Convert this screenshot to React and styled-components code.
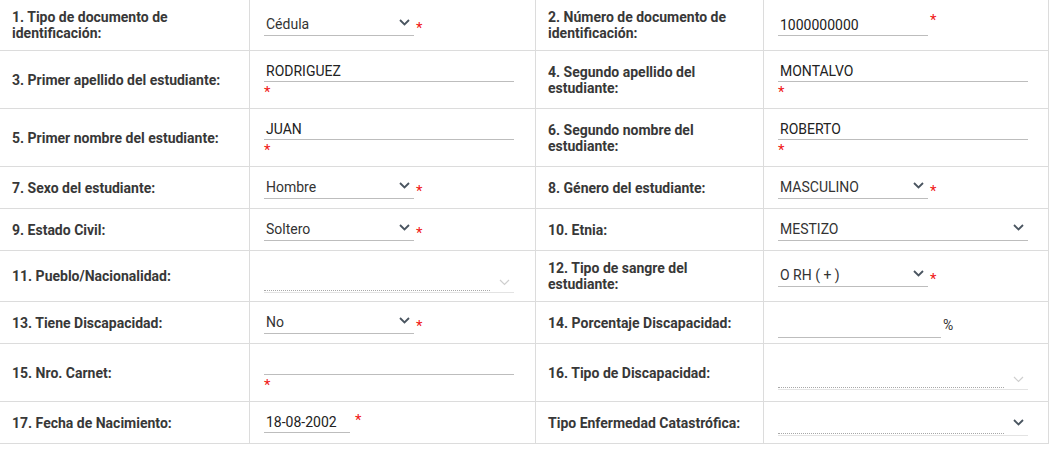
import React from "react";
import styled, { createGlobalStyle } from "styled-components";

const Global = createGlobalStyle`
  body {
    margin: 0;
    background: #fff;
    font-family: Roboto, "Liberation Sans", sans-serif;
  }
`;

const Grid = styled.div`
  display: grid;
  grid-template-columns: 250px 286px 228px 285px;
  grid-template-rows: 51px 58px 58px 42px 42px 51px 42px 58px 42px;
  width: 1049px;
`;

const Cell = styled.div`
  box-sizing: border-box;
  border-right: 1px solid #dcdcdc;
  border-bottom: 1px solid #dcdcdc;
  display: flex;
  align-items: center;
  padding-left: ${(p) => (p.$label ? "12px" : "14px")};
`;

const Label = styled.div`
  font-weight: 700;
  font-size: 14px;
  line-height: 16px;
  color: #383838;
  padding-right: 16px;
`;

const Stack = styled.div`
  display: flex;
  flex-direction: column;
  padding-top: ${(p) => p.$pad || 0}px;
`;

const Inline = styled.div`
  display: flex;
  align-items: center;
`;

const Star = styled.span`
  color: #f01515;
  font-size: 15px;
  line-height: 12px;
  margin-left: ${(p) => p.$gap ?? 2}px;
  margin-top: ${(p) => p.$top ?? 6}px;
  height: 12px;
`;

const Text = styled.div`
  box-sizing: border-box;
  width: ${(p) => p.$w}px;
  height: 21px;
  border-bottom: 1px solid #bdbdbd;
  font-size: 14px;
  color: #222;
  line-height: 20px;
  padding-left: 2px;
`;

const Select = styled.div`
  box-sizing: border-box;
  position: relative;
  width: ${(p) => p.$w}px;
  height: 22px;
  border-bottom: 1px solid ${(p) => (p.$disabled ? "#e3e3e3" : "#bdbdbd")};
  font-size: 14px;
  color: #333;
  line-height: 20px;
  padding-left: 2px;
`;

const Dotted = styled.div`
  position: absolute;
  left: 0;
  right: 24px;
  bottom: 1px;
  border-bottom: 1px dotted #a8a8a8;
`;

const Chevron = styled.svg`
  position: absolute;
  right: 4px;
  top: ${(p) => (p.$light ? 8 : 5)}px;
`;

const Pct = styled.span`
  font-size: 14px;
  color: #333;
  margin-left: 2px;
  margin-top: 4px;
`;

const Arrow = ({ light }) => (
  <Chevron $light={light} width="11" height="7" viewBox="0 0 11 7">
    <path
      d="M1 1l4.5 4.5L10 1"
      fill="none"
      stroke={light ? "#cfcfcf" : "#4a5560"}
      strokeWidth={light ? 1.2 : 1.8}
    />
  </Chevron>
);

const Sel = ({ value, w = 150, star = true, disabled, dark }) => (
  <Inline>
    <Select $w={w} $disabled={disabled}>
      {value}
      {disabled && <Dotted />}
      <Arrow light={disabled && !dark} />
    </Select>
    {star && <Star>*</Star>}
  </Inline>
);

const Field = ({ value, w = 250 }) => (
  <Stack>
    <Text $w={w}>{value}</Text>
    <Star $gap={0} $top={4}>*</Star>
  </Stack>
);

const L = ({ children }) => (
  <Cell $label>
    <Label>{children}</Label>
  </Cell>
);

export default function App() {
  return (
    <>
      <Global />
      <Grid>
        <L>1. Tipo de documento de identificación:</L>
        <Cell><Sel value="Cédula" /></Cell>
        <L>2. Número de documento de identificación:</L>
        <Cell>
          <Inline>
            <Text $w={150}>1000000000</Text>
            <Star $gap={2} $top={-10}>*</Star>
          </Inline>
        </Cell>

        <L>3. Primer apellido del estudiante:</L>
        <Cell><Field value="RODRIGUEZ" /></Cell>
        <L>4. Segundo apellido del estudiante:</L>
        <Cell><Field value="MONTALVO" /></Cell>

        <L>5. Primer nombre del estudiante:</L>
        <Cell><Field value="JUAN" /></Cell>
        <L>6. Segundo nombre del estudiante:</L>
        <Cell><Field value="ROBERTO" /></Cell>

        <L>7. Sexo del estudiante:</L>
        <Cell><Sel value="Hombre" /></Cell>
        <L>8. Género del estudiante:</L>
        <Cell><Sel value="MASCULINO" /></Cell>

        <L>9. Estado Civil:</L>
        <Cell><Sel value="Soltero" /></Cell>
        <L>10. Etnia:</L>
        <Cell><Sel value="MESTIZO" w={250} star={false} /></Cell>

        <L>11. Pueblo/Nacionalidad:</L>
        <Cell><Stack $pad={12}><Sel w={250} star={false} disabled /></Stack></Cell>
        <L>12. Tipo de sangre del estudiante:</L>
        <Cell><Sel value="O RH ( + )" /></Cell>

        <L>13. Tiene Discapacidad:</L>
        <Cell><Sel value="No" /></Cell>
        <L>14. Porcentaje Discapacidad:</L>
        <Cell>
          <Inline>
            <Stack $pad={10}><Text $w={163} /></Stack>
            <Pct>%</Pct>
          </Inline>
        </Cell>

        <L>15. Nro. Carnet:</L>
        <Cell><Field value="" /></Cell>
        <L>16. Tipo de Discapacidad:</L>
        <Cell><Stack $pad={12}><Sel w={250} star={false} disabled /></Stack></Cell>

        <L>17. Fecha de Nacimiento:</L>
        <Cell>
          <Inline>
            <Text $w={86}>18-08-2002</Text>
            <Star $gap={5} $top={-6}>*</Star>
          </Inline>
        </Cell>
        <L>Tipo Enfermedad Catastrófica:</L>
        <Cell><Stack $pad={4}><Sel w={250} star={false} disabled dark /></Stack></Cell>
      </Grid>
    </>
  );
}
